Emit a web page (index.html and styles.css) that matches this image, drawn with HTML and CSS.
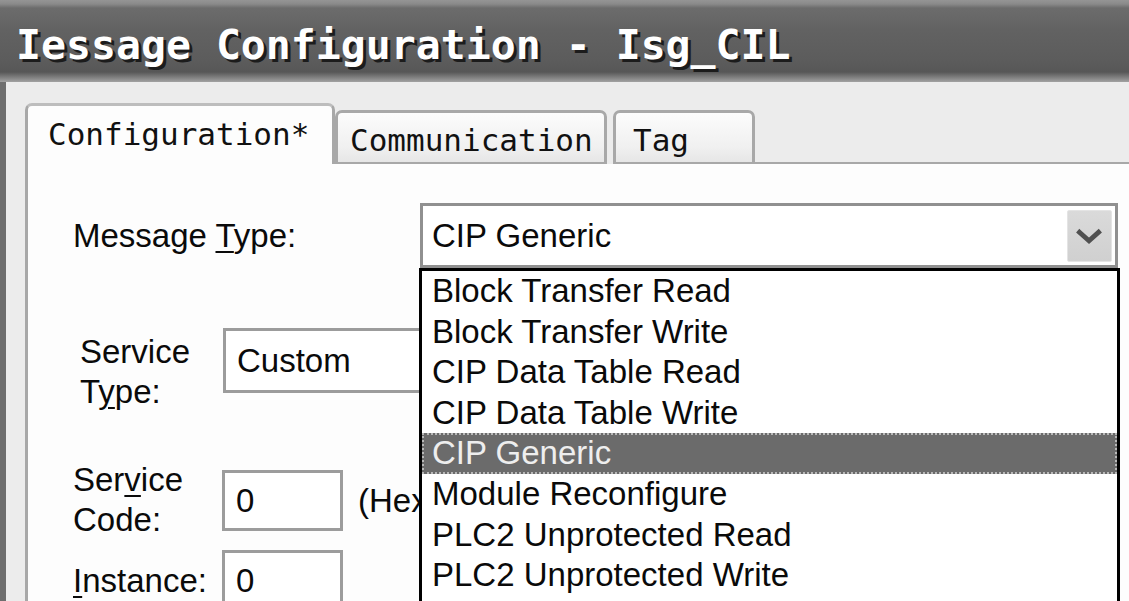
FILE: index.html
```html
<!DOCTYPE html>
<html>
<head>
<meta charset="utf-8">
<title>Message Configuration</title>
<link rel="stylesheet" href="styles.css">
</head>
<body>
  <div class="titlebar"><span class="title">Iessage Configuration - Isg_CIL</span></div>
  <div class="client">
    <div class="tabs">
      <div class="tab tab-config">Configuration*</div>
      <div class="tab tab-comm">Communication</div>
      <div class="tab tab-tag">Tag</div>
      <div class="tab-fill"></div>
    </div>
    <div class="panel">
      <div class="row row-msg">
        <div class="lbl lbl-msg">Message <u>T</u>ype:</div>
        <div class="combo combo-msg">
          <span class="combo-text">CIP Generic</span>
          <span class="drop-btn">
            <svg width="45" height="52" viewBox="0 0 45 52"><polyline points="12,21 22,30 32,21" fill="none" stroke="#505050" stroke-width="5" stroke-linejoin="miter" stroke-linecap="square"/></svg>
          </span>
          <ul class="dropdown">
            <li>Block Transfer Read</li>
            <li>Block Transfer Write</li>
            <li>CIP Data Table Read</li>
            <li>CIP Data Table Write</li>
            <li class="selected">CIP Generic</li>
            <li>Module Reconfigure</li>
            <li>PLC2 Unprotected Read</li>
            <li>PLC2 Unprotected Write</li>
          </ul>
        </div>
      </div>
      <div class="row row-stype">
        <div class="lbl lbl-two lbl-stype">Service<br>T<u>y</u>pe:</div>
        <div class="combo combo-stype">Custom</div>
      </div>
      <div class="row row-scode">
        <div class="lbl lbl-two">Ser<u>v</u>ice<br>Code:</div>
        <div class="field">
          <div class="input">0</div>
          <span class="hex">(Hex)</span>
        </div>
      </div>
      <div class="row row-inst">
        <div class="lbl"><u>I</u>nstance:</div>
        <div class="input">0</div>
      </div>
    </div>
  </div>
</body>
</html>
```

FILE: styles.css
```css
html, body {
  margin: 0;
  padding: 0;
}
body {
  width: 1129px;
  height: 601px;
  overflow: hidden;
  background: #ececec;
  font-family: "Liberation Sans", Arial, sans-serif;
  font-size: 33px;
  color: #0a0a0a;
}

.titlebar {
  height: 82px;
  box-sizing: border-box;
  padding: 6px 0 0 16px;
  display: flex;
  align-items: center;
  background: linear-gradient(#959595 0, #8a8a8a 4px, #6c6c6c 8px, #626262 30px, #5c5c5c 60px, #575757 72px, #7c7c7c 77px, #a2a2a2 82px);
}
.title {
  font-family: "DejaVu Sans Mono", monospace;
  font-weight: bold;
  font-size: 41.5px;
  color: #fff;
  text-shadow: 3px 3px 0 #1c1c1c;
  white-space: pre;
}

.client {
  border-left: 6px solid #6e6e6e;
  height: 519px;
  box-sizing: border-box;
  padding: 21px 0 0 19px;
}

.tabs {
  display: flex;
  align-items: flex-end;
  height: 61px;
}
.tab {
  box-sizing: border-box;
  height: 54px;
  font-family: "DejaVu Sans Mono", monospace;
  font-size: 31px;
  line-height: 36px;
  color: #111;
  white-space: nowrap;
  border: 3px solid #a8a8a8;
  border-bottom-width: 2px;
  border-radius: 7px 7px 0 0;
  background: linear-gradient(#fcfcfc, #f0f0f0 70%, #e6e6e6);
  padding-top: 9px;
}
.tab-config {
  width: 310px;
  height: 61px;
  border-bottom: none;
  border-top-color: #bdbdbd;
  background: #fdfdfd;
  padding: 10px 0 0 20px;
}
.tab-comm {
  width: 272px;
  padding-left: 12px;
}
.tab-tag {
  width: 142px;
  margin-left: 6px;
  padding-left: 17px;
}
.tab-fill {
  flex: 1;
  border-bottom: 2px solid #a8a8a8;
}

.panel {
  height: 437px;
  box-sizing: border-box;
  background: #fdfdfd;
  border-left: 3px solid #a8a8a8;
  padding: 39px 11px 0 45px;
}

.row {
  display: flex;
}
.lbl {
  white-space: nowrap;
  line-height: 40px;
}
.lbl u {
  text-decoration-thickness: 2px;
  text-underline-offset: 4px;
}

.row-msg {
  align-items: center;
}
.lbl-msg {
  flex: 0 0 347px;
}
.combo {
  box-sizing: border-box;
  border: 3px solid #909090;
  background: #fff;
  display: flex;
  align-items: center;
}
.combo-msg {
  flex: 1;
  height: 65px;
  padding-left: 9px;
  position: relative;
}
.drop-btn {
  margin-left: auto;
  margin-right: 3px;
  width: 45px;
  height: 52px;
  box-sizing: border-box;
  background: linear-gradient(#dadada, #d0d0d0);
  border: 1px solid #e4e4e4;
  border-radius: 2px;
  display: flex;
}
.drop-btn svg {
  display: block;
}

.dropdown {
  position: absolute;
  left: -4px;
  right: -5px;
  top: calc(100% + 3px);
  height: 345px;
  margin: 0;
  padding: 0;
  list-style: none;
  background: #fff;
  border: 3px solid #000;
  z-index: 5;
}
.dropdown li {
  height: 40.6px;
  line-height: 40.6px;
  padding-left: 10px;
  white-space: nowrap;
}
.dropdown li.selected {
  background: #6b6b6b;
  color: #eeeeee;
  outline: 2px dotted #b8b8b8;
  outline-offset: -2px;
}

.row-stype {
  margin-top: 60px;
  align-items: flex-start;
}
.lbl-two {
  flex: 0 0 149px;
}
.lbl-stype {
  flex: 0 0 143px;
  padding-left: 7px;
  margin-top: 4px;
}
.combo-stype {
  width: 320px;
  height: 65px;
  padding-left: 11px;
  border-color: #9c9c9c;
}

.row-scode {
  margin-top: 48px;
  align-items: flex-start;
}
.field {
  margin-top: 10px;
  display: flex;
  align-items: center;
}
.input {
  box-sizing: border-box;
  width: 121px;
  height: 61px;
  border: 3px solid #9c9c9c;
  background: #fff;
  padding-left: 11px;
  display: flex;
  align-items: center;
}
.hex {
  margin-left: 15px;
}

.row-inst {
  margin-top: 10px;
  align-items: center;
}
.row-inst .lbl {
  flex: 0 0 149px;
}
```
